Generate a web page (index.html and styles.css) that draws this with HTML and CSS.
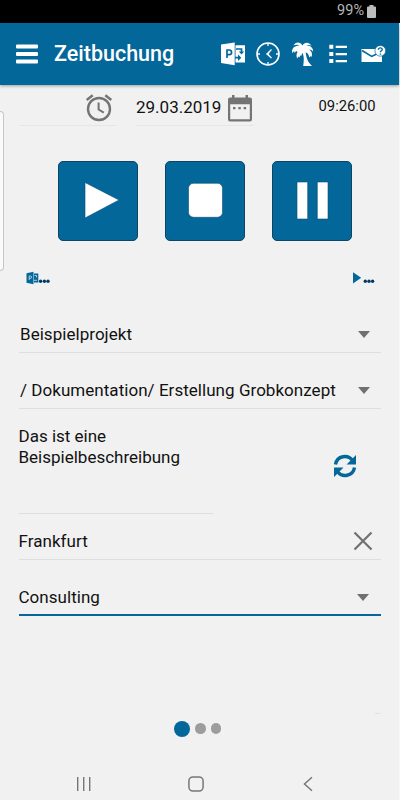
FILE: index.html
```html
<!DOCTYPE html>
<html lang="de">
<head>
<meta charset="utf-8">
<title>Zeitbuchung</title>
<link rel="stylesheet" href="styles.css">
</head>
<body>
<div class="phone">
  <div class="status"><span>99%</span>
    <svg width="9" height="13" viewBox="0 0 9 13"><path fill="#bdbdbd" d="M2.500 0h4v1.500H8q1 0 1 1V12q0 1-1 1H1q-1 0-1-1V2.500q0-1 1-1h1.500z"/></svg>
  </div>
  <header class="appbar">
    <svg class="menu" width="22" height="20" viewBox="0 0 22 20"><g fill="#fff"><rect width="22" height="4" y=".5" rx="1"/><rect width="22" height="4" y="8" rx="1"/><rect width="22" height="4" y="15.500" rx="1"/></g></svg>
    <h1>Zeitbuchung</h1>
    <nav class="actions">
      <svg width="24" height="24" viewBox="0 0 24 24"><path fill="#fff" d="M0 2.500 13.700.5v22.700L0 21zM14.500 3.200H24v17.300h-9.500z"/><path fill="none" stroke="#04679a" stroke-width="1.700" d="M6 16V8h2.200a2.200 2.200 0 0 1 0 4.700H6M15 7h5.500v4M14 15.700h4"/><path fill="#04679a" d="M17.800 9.500h5.400L20.500 12.500zM17 12.500l3.300 3.200L17 19z"/></svg>
      <svg width="24" height="24" viewBox="0 0 24 24"><circle cx="12" cy="12" r="11" fill="none" stroke="#fff" stroke-width="1.600"/><path fill="none" stroke="#fff" stroke-width="1.300" d="M12 1v3M12 20v3M1 12h3M20 12h3M15.500 7.500 11 12l4.500 4"/><path fill="#fff" d="m10.200 12 4.300-2-2 2 2 2z"/></svg>
      <svg width="24" height="24" viewBox="0 0 24 24"><path fill="#fff" d="M11.500 3.500C9.500-.2 4.700-.7 2.500 3.500c2-1.200 4.500-1.200 6 .4C4 3.200.2 6.500 1.200 11l2-2 .3 2 2-2.200.5 1.500 1.500-1.200C5.300 11.500 5 13.700 6.200 16.500l1.300-2 .9 1 .8-2 1.100.3 1.200-3c2 4.700 1.200 9 .7 13.200H21c-4-3.700-5.700-7.500-6.300-13.700 2 .7 3 2.200 3.600 5.200l1.600-1.500.4 1.300c1.500-3 .5-5.700-2-7.500 1.700 0 3 .6 3.800 2C22.400 5.500 19 3.300 15.200 3.900c1.400-1.100 3.200-1.300 5.300-.2C18-.3 13.500-.2 11.500 3.500z"/></svg>
      <svg width="24" height="24" viewBox="0 0 24 24"><path fill="#fff" d="M3.300 2.700h4v4h-4zM3.300 10h4v4h-4zM3.300 17h4v4h-4zM9.700 3.700H21v2.200H9.700zM9.700 11H21v2.200H9.700zM9.700 18H21v2.200H9.700z"/></svg>
      <svg width="26" height="24" viewBox="0 0 26 24"><rect x=".5" y="7" width="20.500" height="13" fill="#fff"/><path fill="none" stroke="#04679a" stroke-width="1.500" d="m1 8.500 9.700 6 6-3"/><circle cx="19.300" cy="8.800" r="5.400" fill="#fff" stroke="#04679a" stroke-width=".7"/><path fill="none" stroke="#04679a" stroke-width="1.400" d="M17.400 7.700c0-2.400 3.800-2.400 3.800-.3 0 1.400-1.800 1.400-1.800 2.900M19.400 11.400v1.300"/></svg>
    </nav>
  </header>
  <main>
    <div class="datetime">
      <div class="alarm"><svg width="28" height="28" viewBox="0 0 28 28"><g fill="none" stroke="#747474"><circle cx="14" cy="15" r="11" stroke-width="2.400"/><path stroke-width="2" d="M13.600 8.500v7l5.200 3.200"/><path stroke-width="2.400" d="m1.700 6 6-4.800M26.300 6l-6-4.800"/></g></svg></div>
      <div class="date"><span>29.03.2019</span><svg width="24" height="28" viewBox="0 0 24 28"><path fill="#747474" fill-rule="evenodd" d="M4 0h2.500v2.500h11V0H20v2.500h2q2 0 2 2V24.500q0 2-2 2H2q-2 0-2-2V4.500q0-2 2-2h2zM2.200 9.300v15h19.600v-15z"/><path fill="#747474" d="M5 12h2.500v2.300H5zM10.300 12h2.500v2.300h-2.500zM15.600 12h2.500v2.300h-2.500z"/></svg></div>
      <time>09:26:00</time>
    </div>
    <div class="controls">
      <button aria-label="Start"><svg width="80" height="80" viewBox="0 0 80 80"><path fill="#fff" stroke="#064f75" stroke-width=".6" d="M27 21.500 61 39 27 57z"/></svg></button>
      <button aria-label="Stopp"><svg width="80" height="80" viewBox="0 0 80 80"><rect x="23.500" y="22.300" width="34" height="34" rx="5" fill="#fff" stroke="#064f75" stroke-width=".6"/></svg></button>
      <button aria-label="Pause"><svg width="80" height="80" viewBox="0 0 80 80"><path fill="#fff" stroke="#064f75" stroke-width=".6" d="M25 21h10.700v37H25zM45.300 21H56v37H45.300z"/></svg></button>
    </div>
    <div class="running">
      <svg width="24" height="14" viewBox="0 0 24 14"><path fill="#04679a" d="m.5 2.200 7-1.400v12.400l-7-1.400zM8 2.500h4.300v9H8z"/><path stroke="#c3dbe7" stroke-width=".9" fill="none" d="M3.200 9V5h1.200a1.200 1.200 0 0 1 0 2.400H3.200M8.500 4.500h2v2M8 9.300h3"/><g fill="#003b68"><circle cx="14.600" cy="10.300" r="1.700"/><circle cx="18.400" cy="10.300" r="1.700"/><circle cx="22" cy="10.300" r="1.700"/></g></svg>
      <svg width="24" height="14" viewBox="0 0 24 14"><path fill="#04679a" d="M2 1.200 10.200 6.800 2 12.400z"/><g fill="#003b68"><circle cx="14.300" cy="10.300" r="1.700"/><circle cx="18" cy="10.300" r="1.700"/><circle cx="21.600" cy="10.300" r="1.700"/></g></svg>
    </div>
    <div class="field project"><span>Beispielprojekt</span><i class="caret"></i></div>
    <div class="field task"><span>/ Dokumentation/ Erstellung Grobkonzept</span><i class="caret"></i></div>
    <div class="note">
      <p>Das ist eine<br>Beispielbeschreibung</p>
      <svg width="24" height="24" viewBox="0 0 24 24"><g fill="none" stroke="#04679a" stroke-width="3.400"><path d="M2.500 10.500C4 1.500 15 .2 19.500 6.500M21.500 13.500C20 22.500 9 23.800 4.500 17.500"/></g><path fill="#04679a" d="M23 1v9.500h-9.500l3.500-3.600zM1 23v-9.500h9.500L7 17.100z"/></svg>
    </div>
    <div class="field place"><span>Frankfurt</span><svg width="20" height="20" viewBox="0 0 20 20"><path stroke="#707070" stroke-width="2.200" d="m1.500 1.500 17 17m0-17-17 17"/></svg></div>
    <div class="field service"><span>Consulting</span><i class="caret"></i></div>
    <div class="spacer"><i></i></div>
    <div class="pager"><i class="active"></i><i></i><i></i></div>
  </main>
  <footer class="sysnav">
    <svg width="16" height="16" viewBox="0 0 16 16"><path stroke="#777" stroke-width="1.400" d="M1.700 1v14M7.700 1v14M13.700 1v14"/></svg>
    <svg width="16" height="16" viewBox="0 0 16 16"><rect x=".9" y=".9" width="14.200" height="14.200" rx="4" fill="none" stroke="#777" stroke-width="1.500"/></svg>
    <svg width="16" height="16" viewBox="0 0 16 16"><path fill="none" stroke="#777" stroke-width="1.500" d="M12 1.300 4.500 8l7.500 6.700"/></svg>
  </footer>
  <div class="edge-handle"></div>
</div>
</body>
</html>
```
FILE: styles.css
```css
* { box-sizing: border-box; }
body { margin: 0; background: #f7f7f7; font-family: Roboto, "Liberation Sans", sans-serif; color: #111; }
svg { display: block; flex: none; }
.phone { position: relative; width: 399px; height: 800px; background: #f1f1f1; display: flex; flex-direction: column; }
.status { height: 22.500px; flex: none; background: #000; color: #b5b5b5; font-size: 14.500px; line-height: 22px; display: flex; justify-content: flex-end; align-items: center; gap: 3px; padding-right: 24px; margin-right: -1px; }
.appbar { height: 62px; flex: none; background: #04679a; display: flex; align-items: center; padding-left: 16px; box-shadow: 0 1px 3px rgba(0, 0, 0, .35); }
.menu { margin-right: 16px; }
h1 { margin: 0; flex: none; width: 167px; font-size: 21.500px; font-weight: 500; color: #fff; }
.actions { display: flex; gap: 11px; }
main { flex: 1; padding: 0 19px; display: flex; flex-direction: column; }
.datetime { height: 41px; flex: none; display: flex; }
.alarm { width: 98px; margin-right: 19px; padding: 9px 0 0 66px; border-bottom: 1px solid #e6e6e6; }
.date { width: 118px; display: flex; gap: 6px; padding-top: 10px; font-size: 17px; line-height: 25px; border-bottom: 1px solid #e6e6e6; }
.date span { width: 86px; white-space: nowrap; }
time { margin-left: 64.500px; padding-top: 12px; font-size: 14.800px; line-height: 19px; }
.controls { display: flex; gap: 27px; padding: 35px 0 0 39px; }
button { width: 80px; height: 80px; border: 1px solid #0c4666; border-radius: 5px; background: #04679a; padding: 0; overflow: hidden; flex: none; }
button svg { margin: -1px; }
.running { display: flex; justify-content: space-between; padding: 30px 5px 0 7px; height: 56px; flex: none; }
.field { display: flex; align-items: center; justify-content: space-between; height: 56px; flex: none; width: 362px; margin-left: -.5px; border-bottom: 1px solid #dedede; font-size: 17px; letter-spacing: .04px; padding: 20px 11px 0 1.500px; white-space: nowrap; }
.caret { border: solid transparent; border-width: 7px 6.500px 0; border-top-color: #707070; }
.note { height: 105px; flex: none; display: flex; justify-content: space-between; padding: 17px 23px 0 0; background: linear-gradient(#dedede, #dedede) left bottom / 194px 1px no-repeat; }
.note p { margin: 0 0 0 -.5px; font-size: 17px; line-height: 21px; }
.note svg { margin-top: 28px; }
.place { height: 46px; padding: 10px 8px 0 0; }
.service { border-bottom: 2px solid #04679a; padding: 21px 12px 0 0; }
.spacer { height: 98px; flex: none; display: flex; justify-content: flex-end; align-items: flex-end; }
.spacer i { width: 5px; height: 1px; background: #e0e0e0; }
.pager { display: flex; align-items: center; gap: 5px; height: 16px; margin: 7px 0 0 155px; }
.pager i { width: 10.500px; height: 10.500px; border-radius: 50%; background: #9d9d9d; }
.pager .active { width: 16px; height: 16px; background: #04679a; }
.sysnav { height: 32px; flex: none; display: flex; gap: 96px; padding-left: 76px; padding-top: 8px; }
.edge-handle { position: absolute; left: 0; top: 111px; width: 4px; height: 160px; border: 1px solid #c5c5c5; border-left: 0; border-radius: 0 4px 4px 0; background: #fafafa; }
```
